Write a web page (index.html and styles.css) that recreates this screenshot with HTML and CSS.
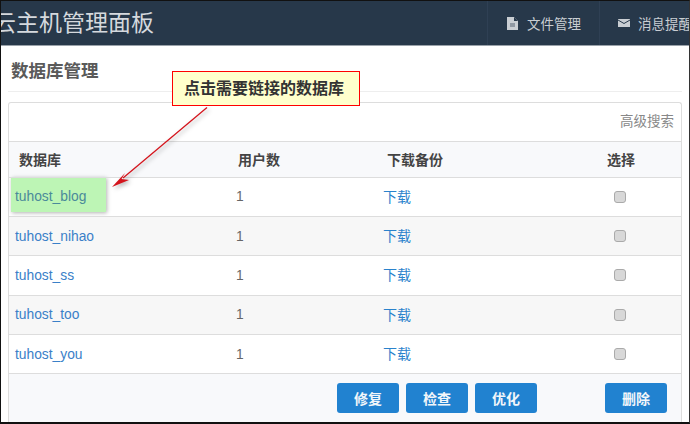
FILE: index.html
```html
<!DOCTYPE html>
<html lang="zh">
<head>
<meta charset="utf-8">
<title>数据库管理</title>
<link rel="stylesheet" href="styles.css">
</head>
<body>
<div class="frame">
  <header class="topbar">
    <div class="brand">云主机管理面板</div>
    <nav class="topnav">
      <a class="navitem">
        <svg class="ico" width="13" height="13" viewBox="0 0 13 13"><path d="M1 0h7l4 4v9H1z" fill="#c9ced3"/><path d="M8 0v4h4z" fill="#27384a"/><rect x="4" y="6" width="5" height="4" fill="#8f98a2"/></svg>
        <span>文件管理</span>
      </a>
      <a class="navitem">
        <svg class="ico" width="12" height="8" viewBox="0 0 12 8"><rect width="12" height="8" fill="#c9ced3"/><path d="M0 1l6 3.5L12 1" fill="none" stroke="#27384a" stroke-width="1"/></svg>
        <span>消息提醒</span>
      </a>
    </nav>
  </header>
  <main class="content">
    <h1 class="pagetitle">数据库管理</h1>
    <section class="panel">
      <div class="searchrow">高级搜索</div>
      <table class="dbtable">
        <thead>
          <tr><th class="c1">数据库</th><th class="c2">用户数</th><th class="c3">下载备份</th><th class="c4">选择</th></tr>
        </thead>
        <tbody>
          <tr><td class="c1 hlcell"><a class="highlight">tuhost_blog</a></td><td class="c2">1</td><td class="c3"><a class="dl">下载</a></td><td class="c4"><span class="check"></span></td></tr>
          <tr><td class="c1"><a>tuhost_nihao</a></td><td class="c2">1</td><td class="c3"><a class="dl">下载</a></td><td class="c4"><span class="check"></span></td></tr>
          <tr><td class="c1"><a>tuhost_ss</a></td><td class="c2">1</td><td class="c3"><a class="dl">下载</a></td><td class="c4"><span class="check"></span></td></tr>
          <tr><td class="c1"><a>tuhost_too</a></td><td class="c2">1</td><td class="c3"><a class="dl">下载</a></td><td class="c4"><span class="check"></span></td></tr>
          <tr><td class="c1"><a>tuhost_you</a></td><td class="c2">1</td><td class="c3"><a class="dl">下载</a></td><td class="c4"><span class="check"></span></td></tr>
        </tbody>
      </table>
      <div class="actions">
        <div class="group"><button class="btn">修复</button><button class="btn">检查</button><button class="btn">优化</button></div>
        <button class="btn">删除</button>
      </div>
    </section>
  </main>
  <div class="callout">点击需要链接的数据库</div>
  <svg class="arrow" width="110" height="90" viewBox="0 0 110 90">
    <line x1="97" y1="0.5" x2="13" y2="71" stroke="#d4141c" stroke-width="1.3"/>
    <path d="M2 80L15 66L11.5 72L19 73Z" fill="#d4141c"/>
  </svg>
</div>
</body>
</html>
```
FILE: styles.css
```css
* { box-sizing: border-box; }
html, body { margin: 0; padding: 0; }
body {
  width: 690px;
  height: 424px;
  overflow: hidden;
  background: #fff;
  font-family: "Liberation Sans", "Noto Sans CJK SC", sans-serif;
  color: #555;
}
.frame {
  position: relative;
  width: 690px;
  height: 424px;
  overflow: hidden;
  border-top: 1px solid #111;
  border-left: 1px solid #111;
  border-right: 1px solid #333;
  border-bottom: 2px solid #111;
  background: #fff;
  display: flex;
  flex-direction: column;
}
.topbar {
  flex: none;
  height: 45px;
  background: #27384a;
  border-bottom: 1px solid #9aa2aa;
  display: flex;
  justify-content: space-between;
  overflow: hidden;
}
.brand {
  margin-left: -8px;
  font-size: 23px;
  line-height: 44px;
  color: #d5d9de;
  white-space: nowrap;
}
.topnav { display: flex; width: 202px; flex: none; }
.navitem {
  display: flex;
  align-items: center;
  gap: 8px;
  height: 44px;
  padding-left: 18px;
  border-left: 1px solid #2f4054;
  font-size: 13.5px;
  color: #c9ced3;
  white-space: nowrap;
  width: 112px;
  flex: none;
}
.content { flex: 1; padding: 0 7px; min-height: 0; }
.pagetitle {
  margin: 0;
  height: 46px;
  padding: 14px 0 0 3px;
  font-size: 17.5px;
  line-height: 22px;
  font-weight: bold;
  color: #5a5a5a;
  border-bottom: 1px solid #eee;
}
.panel {
  margin-top: 10px;
  border: 1px solid #ddd;
  border-bottom: 0;
  border-radius: 3px 3px 0 0;
}
.searchrow {
  height: 39px;
  padding: 0 7px 0 0;
  text-align: right;
  font-size: 13.5px;
  line-height: 38px;
  color: #888;
  border-bottom: 1px solid #ddd;
}
.dbtable {
  width: 100%;
  border-collapse: collapse;
  table-layout: fixed;
  font-size: 13.8px;
}
.dbtable th {
  height: 35px;
  background: #f8f9fb;
  border-bottom: 1px solid #ddd;
  font-weight: bold;
  font-size: 14px;
  color: #444;
  text-align: left;
  padding: 0;
}
.dbtable td {
  height: 39.4px;
  border-bottom: 1px solid #ddd;
  padding: 0;
  color: #666;
}
.dbtable tbody tr:nth-child(even) td { background: #f7f7f7; }
.dbtable a { color: #2a82cc; }
.dbtable td.c1 a { color: #3a80c8; }
.dbtable a.dl { position: relative; top: -1px; font-size: 14px; }
.dbtable th.c1 { padding-left: 10px; width: 219px; }
.dbtable td.c1 { padding-left: 6px; }
.dbtable .c2 { width: 149px; }
.dbtable td.c2 { padding-left: 8px; }
.dbtable th.c2 { padding-left: 10px; }
.dbtable .c3 { width: 221px; }
.dbtable th.c3 { padding-left: 10px; }
.dbtable td.c3 { padding-left: 6px; }
.dbtable th.c4 { padding-left: 9px; }
.dbtable td.c4 { padding-left: 16px; }
.dbtable td.hlcell { vertical-align: top; padding-left: 2px; }
.dbtable td a.highlight {
  display: block;
  background: #bdf5b5;
  color: #4a8a9a;
  margin-top: -1px;
  padding-left: 4px;
  width: 95px;
  height: 35px;
  line-height: 40px;
  box-shadow: 1px 1px 4px rgba(0,0,0,.3);
}
.check {
  display: block;
  width: 12px;
  height: 12px;
  background: #d8d8d8;
  border: 1px solid #aaa;
  border-radius: 3px;
}
.actions {
  height: 50px;
  background: #f8f9fb;
  display: flex;
  justify-content: space-between;
  align-items: flex-start;
  padding: 9px 14px 0 328px;
}
.group { display: flex; gap: 7px; }
.btn {
  width: 62px;
  height: 30px;
  border: 0;
  border-radius: 3px;
  padding: 0;
  background: #2182d0;
  color: #f2f6fa;
  font-family: inherit;
  font-size: 14px;
  font-weight: bold;
}
.callout {
  position: absolute;
  left: 171px;
  top: 70px;
  width: 188px;
  height: 35px;
  background: #ffffcc;
  border: 1px solid #f00;
  padding-right: 4px;
  font-size: 16px;
  font-weight: bold;
  line-height: 33px;
  text-align: center;
  color: #333;
  white-space: nowrap;
}
.arrow {
  position: absolute;
  left: 109px;
  top: 106px;
  filter: drop-shadow(2px 2px 2px rgba(0,0,0,.3));
}
```
